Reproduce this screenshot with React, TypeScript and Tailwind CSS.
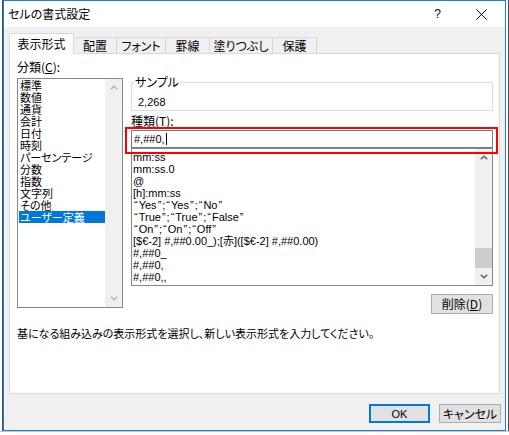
import React from 'react';

const categories = [
  '標準', '数値', '通貨', '会計', '日付', '時刻', 'パーセンテージ',
  '分数', '指数', '文字列', 'その他', 'ユーザー定義',
];

const formats = [
  'mm:ss',
  'mm:ss.0',
  '@',
  '[h]:mm:ss',
  '“Yes”;“Yes”;“No”',
  '“True”;“True”;“False”',
  '“On”;“On”;“Off”',
  '[$€-2] #,##0.00_);[赤]([$€-2] #,##0.00)',
  '#,##0_',
  '#,##0,',
  '#,##0,,',
];

// quotes get a little extra room, like the original dialog font
function FormatText({ text }: { text: string }) {
  const parts = text.split(/([“”])/);
  return (
    <>
      {parts.map((p, i) =>
        p === '“' || p === '”' ? (
          <span key={i} className="px-[1px]">
            {p}
          </span>
        ) : (
          <span key={i}>{p}</span>
        )
      )}
    </>
  );
}

function Chevron({ down = false, color }: { down?: boolean; color: string }) {
  return (
    <svg width="8" height="5" viewBox="0 0 8 5" className={down ? 'rotate-180' : ''}>
      <polyline points="0.8,4.3 4,1.2 7.2,4.3" fill="none" stroke={color} strokeWidth="1.5" />
    </svg>
  );
}

export default function App() {
  return (
    <div className="w-[509px] h-[435px] bg-white flex flex-col overflow-hidden text-black font-['Noto_Sans_CJK_JP',sans-serif] [font-feature-settings:'palt']">
      <div className="flex h-[431px]">
        <div className="w-[3px] bg-white border-r border-[#4a4a4a]" />

        {/* Dialog */}
        <div className="w-[503px] border border-[#1883d7] flex flex-col">
          {/* Title bar */}
          <div className="h-[26px] bg-white flex items-center pl-[4px] text-[12px] leading-[14px]">
            <span className="-mt-[1px]">セルの書式設定</span>
            <span className="ml-auto text-[12px] font-['Liberation_Sans',sans-serif]">?</span>
            <svg width="11" height="11" viewBox="0 0 11 11" className="ml-[35px] mr-[18px]">
              <path d="M0.5 0.5 L10.5 10.5 M10.5 0.5 L0.5 10.5" stroke="#000" strokeWidth="1" />
            </svg>
          </div>

          {/* Body */}
          <div className="flex-1 bg-[#f0f0f0] flex flex-col px-[5px] pt-[6px]">
            {/* Tabs */}
            <div className="h-[21px] flex items-end relative z-10 text-[12px] leading-[14px]">
              <div className="w-[65px] h-[21px] bg-white border-l border-t border-r border-[#d9d9d9] flex items-center justify-center pb-[1px]">
                表示形式
              </div>
              <div className="w-[43px] h-[17px] border-t border-r border-[#d9d9d9] flex items-center justify-center">配置</div>
              <div className="w-[49px] h-[17px] border-t border-r border-[#d9d9d9] flex items-center justify-center">フォント</div>
              <div className="w-[44px] h-[17px] border-t border-r border-[#d9d9d9] flex items-center justify-center">罫線</div>
              <div className="w-[63px] h-[17px] border-t border-r border-[#d9d9d9] flex items-center justify-center">塗りつぶし</div>
              <div className="w-[44px] h-[17px] border-t border-r border-[#d9d9d9] flex items-center justify-center">保護</div>
            </div>

            {/* Panel */}
            <div className="h-[341px] -mt-[1px] bg-white border border-[#d9d9d9] flex flex-col text-[12px] leading-[14px]">
              <div className="flex pl-[7px] pt-[6px]">
                {/* Category list */}
                <div className="w-[106px] flex flex-col">
                  <div className="h-[14px]">
                    分類(<span className="underline">C</span>):
                  </div>
                  <div className="mt-[4px] h-[230px] border border-[#828790] bg-white flex">
                    <div className="flex-1 flex flex-col text-[11px]">
                      {categories.map((c) => (
                        <div
                          key={c}
                          className={`h-[12px] leading-[12px] ml-[1px] pl-[1px] whitespace-nowrap ${
                            c === 'ユーザー定義' ? 'bg-[#0078d7] text-white' : ''
                          }`}
                        >
                          {c}
                        </div>
                      ))}
                    </div>
                    <div className="w-[17px] bg-[#f0f0f0] flex flex-col justify-between">
                      <div className="h-[17px] flex items-center justify-center">
                        <Chevron color="#b4b4b4" />
                      </div>
                      <div className="h-[17px] flex items-center justify-center">
                        <Chevron down color="#b4b4b4" />
                      </div>
                    </div>
                  </div>
                </div>

                {/* Right column */}
                <div className="ml-[8px] w-[362px] flex flex-col">
                  <div className="mt-[22px] h-[29px] border border-[#dcdcdc] relative pl-[6px] pt-[11px]">
                    <span className="absolute left-[2px] -top-[8px] bg-white px-[1px]">サンプル</span>
                    <span className="font-['Liberation_Sans',sans-serif] text-[11px]">2,268</span>
                  </div>
                  <div className="mt-[3px] h-[14px]">
                    種類(<span className="underline">T</span>):
                  </div>
                  <div className="mt-[2px] h-[18px] border border-[#7a7a7a] bg-white relative flex items-center pl-[2px] font-['Liberation_Sans',sans-serif] text-[11px]">
                    <span>#,##0,</span>
                    <span className="w-[1px] h-[12px] bg-black ml-[1px]" />
                    <div className="absolute -left-[7px] -right-[6px] -top-[4px] -bottom-[7px] border-2 border-[#ff0000] z-10" />
                  </div>
                  <div className="h-[138px] border border-[#828790] bg-white flex">
                    <div className="flex-1 flex flex-col pt-[2px] pl-[1px] font-['Liberation_Sans','Noto_Sans_CJK_JP',sans-serif] text-[11px]">
                      {formats.map((f) => (
                        <div key={f} className="h-[12px] leading-[12px] whitespace-nowrap">
                          <FormatText text={f} />
                        </div>
                      ))}
                    </div>
                    <div className="w-[17px] bg-[#f0f0f0] flex flex-col">
                      <div className="h-[17px] flex items-center justify-center">
                        <Chevron color="#606060" />
                      </div>
                      <div className="flex-1 flex flex-col justify-end">
                        <div className="h-[20px] bg-[#cdcdcd]" />
                      </div>
                      <div className="h-[17px] flex items-center justify-center">
                        <Chevron down color="#606060" />
                      </div>
                    </div>
                  </div>
                  <button className="mt-[8px] self-end w-[62px] h-[20px] bg-[#e1e1e1] border border-[#adadad] flex items-center justify-center">
                    削除(<span className="underline">D</span>)
                  </button>
                </div>
              </div>

              <div className="mt-[12px] pl-[7px] text-[11px]">
                基になる組み込みの表示形式を選択し、新しい表示形式を入力してください。
              </div>
            </div>

            {/* Buttons */}
            <div className="mt-[10px] -mr-[1px] flex justify-end gap-[9px] text-[12px] leading-[14px]">
              <button className="w-[61px] h-[19px] bg-[#e1e1e1] border-2 border-[#0078d7] flex items-center justify-center font-['Liberation_Sans',sans-serif] text-[11px]">
                OK
              </button>
              <button className="w-[62px] h-[19px] bg-[#e1e1e1] border border-[#adadad] flex items-center justify-center">
                キャンセル
              </button>
            </div>
          </div>
        </div>

        <div className="w-[3px] bg-white border-r border-[#4a4a4a]" />
      </div>
      <div className="h-[4px] bg-white border-t border-[#c6c6c6]" />
    </div>
  );
}
